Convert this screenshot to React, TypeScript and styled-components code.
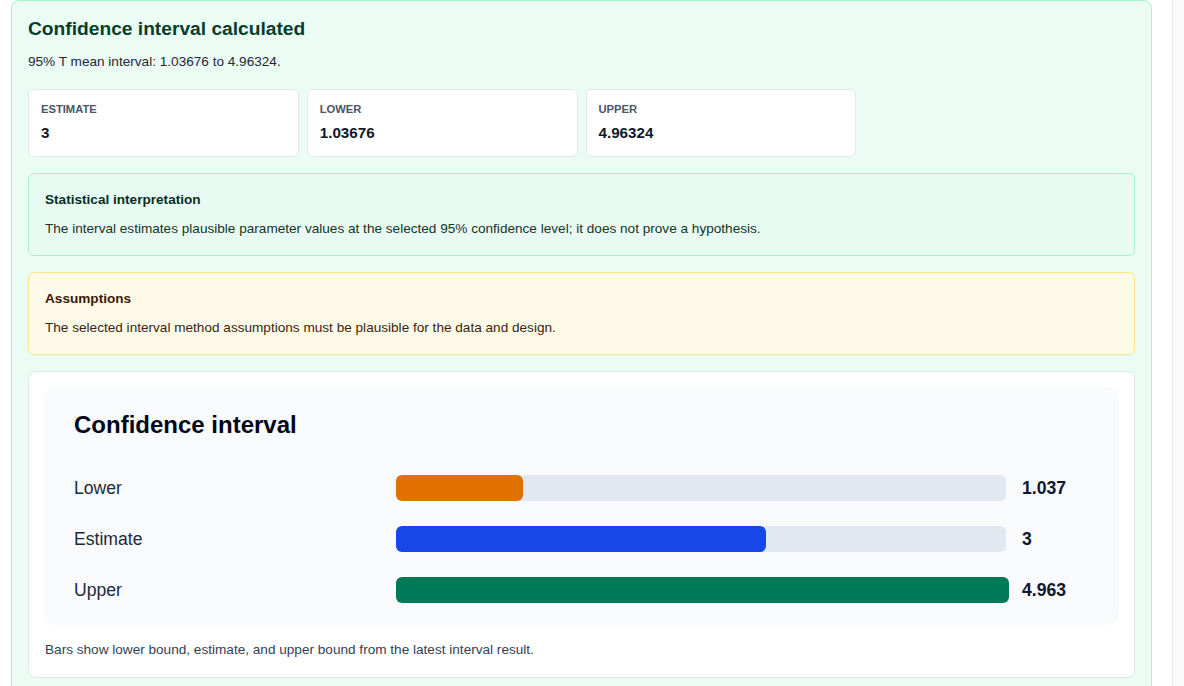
import React from "react";
import styled, { createGlobalStyle } from "styled-components";

const GlobalStyle = createGlobalStyle`
    html, body {
        margin: 0;
        padding: 0;
        background: #ffffff;
        font-family: "Liberation Sans", Arial, sans-serif;
    }
    * {
        box-sizing: border-box;
    }
`

const Page = styled.div`
    display: flex;
    height: 686px;
    overflow: hidden;
`

const Main = styled.main`
    width: 1172px;
    padding: 0 20px 0 11px;
`

const Sidebar = styled.aside`
    flex: 1;
    background: #f8fafc;
    border-left: 1px solid #e2e8f0;
`

const ResultPanel = styled.section`
    background: #eafcf3;
    border: 1px solid #a7f3d0;
    border-radius: 8px;
    padding: 15px 16px 24px;
`

const Title = styled.h2`
    margin: 0;
    font-size: 19.2px;
    line-height: 25px;
    font-weight: 700;
    color: #063d2c;
`

const Summary = styled.p`
    margin: 11px 0 0;
    font-size: 13.6px;
    line-height: 19px;
    color: #1f2937;
`

const Stack = styled.div`
    display: flex;
    flex-direction: column;
    gap: 16px;
    margin-top: 18px;
`

const StatGrid = styled.div`
    display: grid;
    grid-template-columns: repeat(4, 1fr);
    gap: 8px;
`

const StatCard = styled.div`
    background: #ffffff;
    border: 1px solid #e2e8f0;
    border-radius: 6px;
    padding: 12px 12px 14px;
    height: 68px;
`

const StatLabel = styled.div`
    font-size: 11.2px;
    line-height: 15px;
    font-weight: 700;
    color: #475569;
    text-transform: uppercase;
`

const StatValue = styled.div`
    margin-top: 6px;
    font-size: 15.2px;
    line-height: 20px;
    font-weight: 700;
    color: #0f172a;
`

type Tone = "green" | "amber";

const Note = styled.div<{ $tone: Tone }>`
    background: ${(p) => (p.$tone === "green" ? "#e8fbf2" : "#fefae8")};
    border: 1px solid ${(p) => (p.$tone === "green" ? "#a7f3d0" : "#fde68a")};
    border-radius: 6px;
    padding: 17px 16px 16px;
    height: 83px;
`

const NoteTitle = styled.div<{ $tone: Tone }>`
    font-size: 13.6px;
    line-height: 17px;
    font-weight: 700;
    color: ${(p) => (p.$tone === "green" ? "#052e22" : "#3b1706")};
`

const NoteText = styled.p<{ $tone: Tone }>`
    margin: 11px 0 0;
    font-size: 13.6px;
    line-height: 19px;
    color: ${(p) => (p.$tone === "green" ? "#163328" : "#3a2410")};
`

const ChartCard = styled.div`
    background: #ffffff;
    border: 1px solid #dde7ee;
    border-radius: 8px;
    padding: 15px 15px 18px;
`

const ChartInner = styled.div`
    background: #f8fafc;
    border-radius: 12px;
    padding: 23px 30px 22px;
`

const ChartTitle = styled.h3`
    margin: 0;
    font-size: 24px;
    line-height: 30px;
    font-weight: 700;
    color: #020617;
`

const Rows = styled.div`
    display: flex;
    flex-direction: column;
    gap: 25px;
    margin-top: 35px;
`

const Row = styled.div`
    display: grid;
    grid-template-columns: 306px 1fr 67px;
    column-gap: 16px;
    align-items: center;
    height: 26px;
`

const RowLabel = styled.span`
    font-size: 17.6px;
    color: #1e293b;
`

const Track = styled.div`
    height: 26px;
    background: #e2e8f0;
    border-radius: 6px;
`

const Fill = styled.div<{ $color: string }>`
    height: 100%;
    background: ${(p) => p.$color};
    border-radius: 6px;
`

const RowValue = styled.span`
    font-size: 17.6px;
    font-weight: 700;
    color: #0f172a;
`

const Caption = styled.p`
    margin: 15px 0 0 1px;
    font-size: 13.6px;
    line-height: 19px;
    color: #334155;
`

const stats = [
    { label: "Estimate", value: "3" },
    { label: "Lower", value: "1.03676" },
    { label: "Upper", value: "4.96324" },
];

const bars = [
    { label: "Lower", value: "1.037", pct: 20.9, color: "#e07000" },
    { label: "Estimate", value: "3", pct: 60.7, color: "#1747e6" },
    { label: "Upper", value: "4.963", pct: 100.5, color: "#007a56" },
];

const App = () => {
    return (
        <>
            <GlobalStyle />
            <Page>
                <Main>
                    <ResultPanel>
                        <Title>Confidence interval calculated</Title>
                        <Summary>95% T mean interval: 1.03676 to 4.96324.</Summary>
                        <Stack>
                            <StatGrid>
                                {stats.map((s) => (
                                    <StatCard key={s.label}>
                                        <StatLabel>{s.label}</StatLabel>
                                        <StatValue>{s.value}</StatValue>
                                    </StatCard>
                                ))}
                            </StatGrid>
                            <Note $tone="green">
                                <NoteTitle $tone="green">Statistical interpretation</NoteTitle>
                                <NoteText $tone="green">
                                    The interval estimates plausible parameter values at the selected 95% confidence level; it does not prove a hypothesis.
                                </NoteText>
                            </Note>
                            <Note $tone="amber">
                                <NoteTitle $tone="amber">Assumptions</NoteTitle>
                                <NoteText $tone="amber">
                                    The selected interval method assumptions must be plausible for the data and design.
                                </NoteText>
                            </Note>
                            <ChartCard>
                                <ChartInner>
                                    <ChartTitle>Confidence interval</ChartTitle>
                                    <Rows>
                                        {bars.map((b) => (
                                            <Row key={b.label}>
                                                <RowLabel>{b.label}</RowLabel>
                                                <Track>
                                                    <Fill $color={b.color} style={{ width: `${b.pct}%` }} />
                                                </Track>
                                                <RowValue>{b.value}</RowValue>
                                            </Row>
                                        ))}
                                    </Rows>
                                </ChartInner>
                                <Caption>Bars show lower bound, estimate, and upper bound from the latest interval result.</Caption>
                            </ChartCard>
                        </Stack>
                    </ResultPanel>
                </Main>
                <Sidebar />
            </Page>
        </>
    )
}

export default App;
